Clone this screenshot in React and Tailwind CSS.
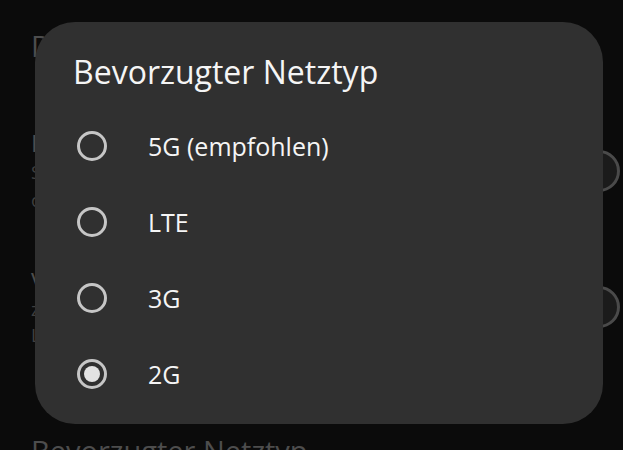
import React, { useState } from 'react';

const options = ['5G (empfohlen)', 'LTE', '3G', '2G'];

function Radio({ checked }) {
    return (
        <div className="w-[30px] h-[30px] rounded-full border-[3px] border-[#c6c6c6] flex items-center justify-center shrink-0">
            {checked && <div className="w-[16px] h-[16px] rounded-full bg-[#e3e3e3]" />}
        </div>
    );
}

export default function App() {
    const [selected, setSelected] = useState('2G');

    return (
        <div className="relative w-[623px] h-[450px] overflow-hidden bg-[#0b0b0b]" style={{ fontFamily: '"Open Sans", Roboto, sans-serif' }}>
            {/* Settings list behind the dialog */}
            <div className="flex flex-col pl-[31px] text-[#4d4d4d]">
                <div className="pt-[28px] text-[29px] leading-[36px]">Daten</div>
                <div className="flex items-center justify-between mt-[64px]">
                    <div className="flex flex-col">
                        <div className="text-[24px] leading-[30px]">Roaming</div>
                        <div className="text-[18px] leading-[28px] text-[#3f3f3f]">Sie können Datenroaming</div>
                        <div className="text-[18px] leading-[28px] text-[#3f3f3f]">oder Kosten</div>
                    </div>
                    <div className="w-[42px] h-[42px] rounded-full border-[3px] border-[#4a4a4a] bg-[#1b1b1b] mr-[3px]" />
                </div>
                <div className="flex items-center justify-between mt-[52px]">
                    <div className="flex flex-col">
                        <div className="text-[24px] leading-[30px]">VoLTE</div>
                        <div className="text-[18px] leading-[26px] text-[#3f3f3f]">zur Verbesserung von</div>
                        <div className="text-[18px] leading-[26px] text-[#3f3f3f]">LTE-Anrufen</div>
                    </div>
                    <div className="w-[42px] h-[42px] rounded-full border-[3px] border-[#4a4a4a] bg-[#1b1b1b] mr-[3px]" />
                </div>
                <div className="mt-[85px] text-[29px] leading-[36px]">Bevorzugter Netztyp</div>
            </div>

            {/* Dialog */}
            <div className="absolute left-[35px] top-[22px] w-[568px] h-[402px] rounded-[40px] bg-[#303030] flex flex-col">
                <div className="pt-[31px] pl-[38px] text-[32px] leading-[37px] text-[#f5f5f5]">Bevorzugter Netztyp</div>
                <div className="flex flex-col mt-[18px]">
                    {options.map(o => (
                        <div key={o} onClick={() => setSelected(o)} className="flex items-center h-[76px] pl-[42px] cursor-pointer">
                            <Radio checked={selected === o} />
                            <span className="ml-[41px] text-[25px] leading-[30px] text-[#f5f5f5]">{o}</span>
                        </div>
                    ))}
                </div>
            </div>
        </div>
    );
}
